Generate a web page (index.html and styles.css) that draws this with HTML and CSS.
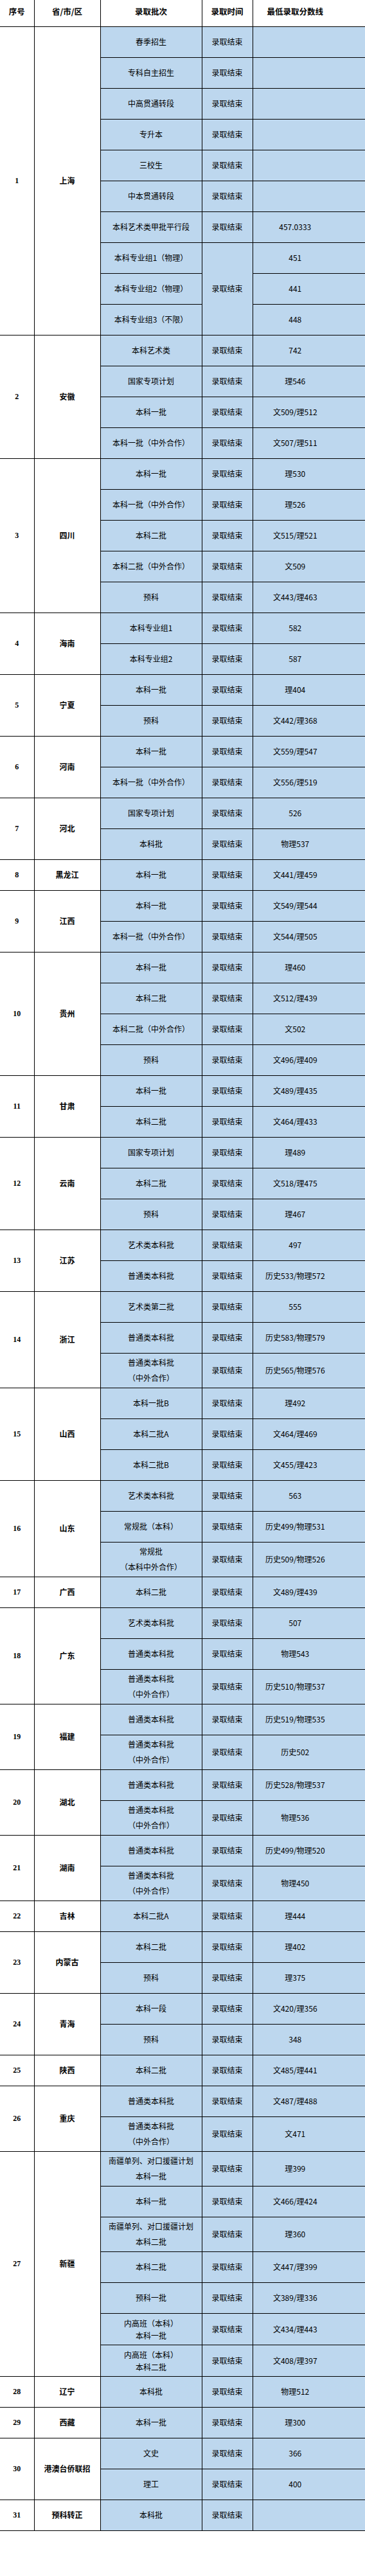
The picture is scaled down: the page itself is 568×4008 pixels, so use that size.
FILE: index.html
```html
<!DOCTYPE html>
<html lang="zh-CN">
<head>
<meta charset="utf-8">
<title>录取分数线</title>
<link rel="stylesheet" href="styles.css">
</head>
<body>
<table class="grid">
<colgroup>
<col class="w-no"><col class="w-prov"><col class="w-batch"><col class="w-time"><col class="w-score">
</colgroup>
<thead>
<tr class="head"><th class="no-col">序号</th><th>省/市/区</th><th>录取批次</th><th>录取时间</th><th class="score">最低录取分数线</th></tr>
</thead>
<tbody>
<tr class="r1"><td class="no" rowspan="10">1</td><td class="prov" rowspan="10">上海</td><td class="b">春季招生</td><td class="b">录取结束</td><td class="b score"></td></tr>
<tr class="r1"><td class="b">专科自主招生</td><td class="b">录取结束</td><td class="b score"></td></tr>
<tr class="r1"><td class="b">中高贯通转段</td><td class="b">录取结束</td><td class="b score"></td></tr>
<tr class="r1"><td class="b">专升本</td><td class="b">录取结束</td><td class="b score"></td></tr>
<tr class="r1"><td class="b">三校生</td><td class="b">录取结束</td><td class="b score"></td></tr>
<tr class="r1"><td class="b">中本贯通转段</td><td class="b">录取结束</td><td class="b score"></td></tr>
<tr class="r1"><td class="b">本科艺术类甲批平行段</td><td class="b">录取结束</td><td class="b score">457.0333</td></tr>
<tr class="r1"><td class="b">本科专业组1（物理）</td><td class="b" rowspan="3">录取结束</td><td class="b score">451</td></tr>
<tr class="r1"><td class="b">本科专业组2（物理）</td><td class="b score">441</td></tr>
<tr class="r1"><td class="b">本科专业组3（不限）</td><td class="b score">448</td></tr>

<tr class="r1"><td class="no" rowspan="4">2</td><td class="prov" rowspan="4">安徽</td><td class="b">本科艺术类</td><td class="b">录取结束</td><td class="b score">742</td></tr>
<tr class="r1"><td class="b">国家专项计划</td><td class="b">录取结束</td><td class="b score">理546</td></tr>
<tr class="r1"><td class="b">本科一批</td><td class="b">录取结束</td><td class="b score">文509/理512</td></tr>
<tr class="r1"><td class="b">本科一批（中外合作）</td><td class="b">录取结束</td><td class="b score">文507/理511</td></tr>

<tr class="r1"><td class="no" rowspan="5">3</td><td class="prov" rowspan="5">四川</td><td class="b">本科一批</td><td class="b">录取结束</td><td class="b score">理530</td></tr>
<tr class="r1"><td class="b">本科一批（中外合作）</td><td class="b">录取结束</td><td class="b score">理526</td></tr>
<tr class="r1"><td class="b">本科二批</td><td class="b">录取结束</td><td class="b score">文515/理521</td></tr>
<tr class="r1"><td class="b">本科二批（中外合作）</td><td class="b">录取结束</td><td class="b score">文509</td></tr>
<tr class="r1"><td class="b">预科</td><td class="b">录取结束</td><td class="b score">文443/理463</td></tr>

<tr class="r1"><td class="no" rowspan="2">4</td><td class="prov" rowspan="2">海南</td><td class="b">本科专业组1</td><td class="b">录取结束</td><td class="b score">582</td></tr>
<tr class="r1"><td class="b">本科专业组2</td><td class="b">录取结束</td><td class="b score">587</td></tr>

<tr class="r1"><td class="no" rowspan="2">5</td><td class="prov" rowspan="2">宁夏</td><td class="b">本科一批</td><td class="b">录取结束</td><td class="b score">理404</td></tr>
<tr class="r1"><td class="b">预科</td><td class="b">录取结束</td><td class="b score">文442/理368</td></tr>

<tr class="r1"><td class="no" rowspan="2">6</td><td class="prov" rowspan="2">河南</td><td class="b">本科一批</td><td class="b">录取结束</td><td class="b score">文559/理547</td></tr>
<tr class="r1"><td class="b">本科一批（中外合作）</td><td class="b">录取结束</td><td class="b score">文556/理519</td></tr>

<tr class="r1"><td class="no" rowspan="2">7</td><td class="prov" rowspan="2">河北</td><td class="b">国家专项计划</td><td class="b">录取结束</td><td class="b score">526</td></tr>
<tr class="r1"><td class="b">本科批</td><td class="b">录取结束</td><td class="b score">物理537</td></tr>

<tr class="r1"><td class="no">8</td><td class="prov">黑龙江</td><td class="b">本科一批</td><td class="b">录取结束</td><td class="b score">文441/理459</td></tr>

<tr class="r1"><td class="no" rowspan="2">9</td><td class="prov" rowspan="2">江西</td><td class="b">本科一批</td><td class="b">录取结束</td><td class="b score">文549/理544</td></tr>
<tr class="r1"><td class="b">本科一批（中外合作）</td><td class="b">录取结束</td><td class="b score">文544/理505</td></tr>

<tr class="r1"><td class="no" rowspan="4">10</td><td class="prov" rowspan="4">贵州</td><td class="b">本科一批</td><td class="b">录取结束</td><td class="b score">理460</td></tr>
<tr class="r1"><td class="b">本科二批</td><td class="b">录取结束</td><td class="b score">文512/理439</td></tr>
<tr class="r1"><td class="b">本科二批（中外合作）</td><td class="b">录取结束</td><td class="b score">文502</td></tr>
<tr class="r1"><td class="b">预科</td><td class="b">录取结束</td><td class="b score">文496/理409</td></tr>

<tr class="r1"><td class="no" rowspan="2">11</td><td class="prov" rowspan="2">甘肃</td><td class="b">本科一批</td><td class="b">录取结束</td><td class="b score">文489/理435</td></tr>
<tr class="r1"><td class="b">本科二批</td><td class="b">录取结束</td><td class="b score">文464/理433</td></tr>

<tr class="r1"><td class="no" rowspan="3">12</td><td class="prov" rowspan="3">云南</td><td class="b">国家专项计划</td><td class="b">录取结束</td><td class="b score">理489</td></tr>
<tr class="r1"><td class="b">本科二批</td><td class="b">录取结束</td><td class="b score">文518/理475</td></tr>
<tr class="r1"><td class="b">预科</td><td class="b">录取结束</td><td class="b score">理467</td></tr>

<tr class="r1"><td class="no" rowspan="2">13</td><td class="prov" rowspan="2">江苏</td><td class="b">艺术类本科批</td><td class="b">录取结束</td><td class="b score">497</td></tr>
<tr class="r1"><td class="b">普通类本科批</td><td class="b">录取结束</td><td class="b score">历史533/物理572</td></tr>

<tr class="r1"><td class="no" rowspan="3">14</td><td class="prov" rowspan="3">浙江</td><td class="b">艺术类第二批</td><td class="b">录取结束</td><td class="b score">555</td></tr>
<tr class="r1"><td class="b">普通类本科批</td><td class="b">录取结束</td><td class="b score">历史583/物理579</td></tr>
<tr class="r2"><td class="b two">普通类本科批<br>（中外合作）</td><td class="b">录取结束</td><td class="b score">历史565/物理576</td></tr>

<tr class="r1"><td class="no" rowspan="3">15</td><td class="prov" rowspan="3">山西</td><td class="b">本科一批B</td><td class="b">录取结束</td><td class="b score">理492</td></tr>
<tr class="r1"><td class="b">本科二批A</td><td class="b">录取结束</td><td class="b score">文464/理469</td></tr>
<tr class="r1"><td class="b">本科二批B</td><td class="b">录取结束</td><td class="b score">文455/理423</td></tr>

<tr class="r1"><td class="no" rowspan="3">16</td><td class="prov" rowspan="3">山东</td><td class="b">艺术类本科批</td><td class="b">录取结束</td><td class="b score">563</td></tr>
<tr class="r1"><td class="b">常规批（本科）</td><td class="b">录取结束</td><td class="b score">历史499/物理531</td></tr>
<tr class="r2"><td class="b two">常规批<br>（本科中外合作）</td><td class="b">录取结束</td><td class="b score">历史509/物理526</td></tr>

<tr class="r1"><td class="no">17</td><td class="prov">广西</td><td class="b">本科二批</td><td class="b">录取结束</td><td class="b score">文489/理439</td></tr>

<tr class="r1"><td class="no" rowspan="3">18</td><td class="prov" rowspan="3">广东</td><td class="b">艺术类本科批</td><td class="b">录取结束</td><td class="b score">507</td></tr>
<tr class="r1"><td class="b">普通类本科批</td><td class="b">录取结束</td><td class="b score">物理543</td></tr>
<tr class="r2"><td class="b two">普通类本科批<br>（中外合作）</td><td class="b">录取结束</td><td class="b score">历史510/物理537</td></tr>

<tr class="r1"><td class="no" rowspan="2">19</td><td class="prov" rowspan="2">福建</td><td class="b">普通类本科批</td><td class="b">录取结束</td><td class="b score">历史519/物理535</td></tr>
<tr class="r2"><td class="b two">普通类本科批<br>（中外合作）</td><td class="b">录取结束</td><td class="b score">历史502</td></tr>

<tr class="r1"><td class="no" rowspan="2">20</td><td class="prov" rowspan="2">湖北</td><td class="b">普通类本科批</td><td class="b">录取结束</td><td class="b score">历史528/物理537</td></tr>
<tr class="r2"><td class="b two">普通类本科批<br>（中外合作）</td><td class="b">录取结束</td><td class="b score">物理536</td></tr>

<tr class="r1"><td class="no" rowspan="2">21</td><td class="prov" rowspan="2">湖南</td><td class="b">普通类本科批</td><td class="b">录取结束</td><td class="b score">历史499/物理520</td></tr>
<tr class="r2"><td class="b two">普通类本科批<br>（中外合作）</td><td class="b">录取结束</td><td class="b score">物理450</td></tr>

<tr class="r1"><td class="no">22</td><td class="prov">吉林</td><td class="b">本科二批A</td><td class="b">录取结束</td><td class="b score">理444</td></tr>

<tr class="r1"><td class="no" rowspan="2">23</td><td class="prov" rowspan="2">内蒙古</td><td class="b">本科二批</td><td class="b">录取结束</td><td class="b score">理402</td></tr>
<tr class="r1"><td class="b">预科</td><td class="b">录取结束</td><td class="b score">理375</td></tr>

<tr class="r1"><td class="no" rowspan="2">24</td><td class="prov" rowspan="2">青海</td><td class="b">本科一段</td><td class="b">录取结束</td><td class="b score">文420/理356</td></tr>
<tr class="r1"><td class="b">预科</td><td class="b">录取结束</td><td class="b score">348</td></tr>

<tr class="r1"><td class="no">25</td><td class="prov">陕西</td><td class="b">本科二批</td><td class="b">录取结束</td><td class="b score">文485/理441</td></tr>

<tr class="r1"><td class="no" rowspan="2">26</td><td class="prov" rowspan="2">重庆</td><td class="b">普通类本科批</td><td class="b">录取结束</td><td class="b score">文487/理488</td></tr>
<tr class="r2"><td class="b two">普通类本科批<br>（中外合作）</td><td class="b">录取结束</td><td class="b score">文471</td></tr>

<tr class="r2"><td class="no" rowspan="7">27</td><td class="prov" rowspan="7">新疆</td><td class="b two">南疆单列、对口援疆计划<br>本科一批</td><td class="b">录取结束</td><td class="b score">理399</td></tr>
<tr class="r1"><td class="b">本科一批</td><td class="b">录取结束</td><td class="b score">文466/理424</td></tr>
<tr class="r2"><td class="b two">南疆单列、对口援疆计划<br>本科二批</td><td class="b">录取结束</td><td class="b score">理360</td></tr>
<tr class="r1"><td class="b">本科二批</td><td class="b">录取结束</td><td class="b score">文447/理399</td></tr>
<tr class="r1"><td class="b">预科一批</td><td class="b">录取结束</td><td class="b score">文389/理336</td></tr>
<tr class="r3"><td class="b tight">内高班（本科）<br>本科一批</td><td class="b">录取结束</td><td class="b score">文434/理443</td></tr>
<tr class="r3"><td class="b tight">内高班（本科）<br>本科二批</td><td class="b">录取结束</td><td class="b score">文408/理397</td></tr>

<tr class="r1"><td class="no">28</td><td class="prov">辽宁</td><td class="b">本科批</td><td class="b">录取结束</td><td class="b score">物理512</td></tr>

<tr class="r1"><td class="no">29</td><td class="prov">西藏</td><td class="b">本科一批</td><td class="b">录取结束</td><td class="b score">理300</td></tr>

<tr class="r1"><td class="no" rowspan="2">30</td><td class="prov" rowspan="2">港澳台侨联招</td><td class="b">文史</td><td class="b">录取结束</td><td class="b score">366</td></tr>
<tr class="r1"><td class="b">理工</td><td class="b">录取结束</td><td class="b score">400</td></tr>

<tr class="r1"><td class="no">31</td><td class="prov">预科转正</td><td class="b">本科批</td><td class="b">录取结束</td><td class="b score"></td></tr>
</tbody>
</table>
</body>
</html>
```
FILE: styles.css
```css
html, body {
  margin: 0;
  padding: 0;
  background: #ffffff;
}

body {
  font-family: "Noto Sans CJK SC", "Noto Sans", sans-serif;
  color: #000000;
  overflow-x: hidden;
}

.grid {
  border-collapse: collapse;
  table-layout: fixed;
  width: 568px;
}

.w-no { width: 53px; }
.w-prov { width: 103px; }
.w-batch { width: 158px; }
.w-time { width: 79px; }
.w-score { width: 175px; }

.grid th,
.grid td {
  border: 1px solid #000000;
  padding: 0;
  text-align: center;
  vertical-align: middle;
  font-size: 12px;
  line-height: 16px;
  white-space: nowrap;
}

.head {
  height: 41px;
}

.grid th {
  border-top: none;
  font-weight: bold;
  font-size: 12.5px;
  padding-bottom: 5px;
}

.grid .no-col,
.grid .no {
  border-left: none;
}

.grid .score {
  border-right: none;
  padding-right: 43px;
}

.r1 { height: 48px; }
.r2 { height: 54px; }
.r3 { height: 49px; }

.b {
  background: #bdd7ee;
}

.no {
  font-family: "Liberation Serif", "Times New Roman", serif;
  font-weight: bold;
  font-size: 13px;
}

.prov {
  font-weight: bold;
  font-size: 12.5px;
}

.grid .two {
  line-height: 24px;
}

.grid .tight {
  line-height: 19px;
}
```
